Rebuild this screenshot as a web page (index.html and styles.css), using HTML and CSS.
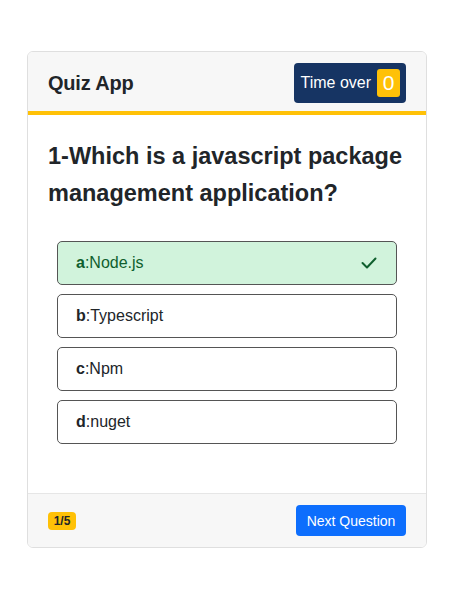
FILE: index.html
```html
<!DOCTYPE html>
<html lang="en">
<head>
<meta charset="utf-8">
<title>Quiz App</title>
<link rel="stylesheet" href="styles.css">
</head>
<body>
<div class="card">
  <div class="card-header">
    <h5 class="title">Quiz App</h5>
    <div class="timer"><span>Time over</span> <span class="timer-count">0</span></div>
  </div>
  <div class="card-body">
    <h4 class="question">1-Which is a javascript package management application?</h4>
    <ul class="options">
      <li class="option correct"><span><b>a</b>:Node.js</span>
        <svg class="check" width="16" height="12" viewBox="0 0 16 12"><polyline points="1.5,6 6,10.5 14.5,1.5" fill="none" stroke="currentColor" stroke-width="2" stroke-linecap="round" stroke-linejoin="round"/></svg>
      </li>
      <li class="option"><span><b>b</b>:Typescript</span></li>
      <li class="option"><span><b>c</b>:Npm</span></li>
      <li class="option"><span><b>d</b>:nuget</span></li>
    </ul>
  </div>
  <div class="card-footer">
    <span class="badge">1/5</span>
    <button class="btn-next">Next Question</button>
  </div>
</div>
</body>
</html>
```
FILE: styles.css
```css
* { box-sizing: border-box; }
body {
  margin: 0;
  font-family: "Liberation Sans", Arial, sans-serif;
  color: #212529;
  background: #fff;
}
.card {
  width: 400px;
  margin: 51px 0 0 27px;
  border: 1px solid #dfdfdf;
  border-radius: 6px;
  overflow: hidden;
  background: #fff;
}
.card-header {
  display: flex;
  justify-content: space-between;
  align-items: center;
  height: 63px;
  padding: 11px 20px 8px 20px;
  background: #f7f7f7;
  border-bottom: 4px solid #ffc107;
}
.title {
  margin: 0;
  font-size: 20px;
  font-weight: 700;
  color: #212529;
  letter-spacing: -0.2px;
}
.timer {
  display: flex;
  align-items: center;
  gap: 6px;
  height: 40px;
  flex-shrink: 0;
  white-space: nowrap;
  padding: 0 6px 0 6px;
  background: #163463;
  color: #fff;
  font-size: 16px;
  border-radius: 4px;
}
.timer-count {
  display: flex;
  align-items: center;
  justify-content: center;
  width: 23px;
  height: 28px;
  background: #ffc107;
  color: #fff;
  font-size: 21px;
  border-radius: 3px;
}
.card-body {
  padding: 23px 20px 49px 20px;
}
.question {
  margin: 0 0 29px 0;
  font-size: 23.5px;
  line-height: 37px;
  font-weight: 700;
  color: #212529;
}
.options {
  list-style: none;
  margin: 0 9px;
  padding: 0;
  display: flex;
  flex-direction: column;
  gap: 9px;
}
.option {
  display: flex;
  align-items: center;
  justify-content: space-between;
  height: 44px;
  padding: 0 19px 0 18px;
  border: 1px solid #555;
  border-radius: 5px;
  font-size: 16px;
  color: #212529;
}
.option b { font-weight: 700; }
.option.correct {
  background: #d1f3dc;
  color: #0f5f2e;
}
.check { color: #0f5f2e; }
.card-footer {
  display: flex;
  justify-content: space-between;
  align-items: center;
  padding: 11px 20px;
  background: #f7f7f7;
  border-top: 1px solid #e6e6e6;
}
.badge {
  display: inline-flex;
  align-items: center;
  justify-content: center;
  width: 28px;
  height: 18px;
  background: #ffc107;
  color: #212529;
  font-size: 12px;
  font-weight: 700;
  border-radius: 4px;
}
.btn-next {
  height: 31px;
  width: 110px;
  padding: 0 8px;
  border: none;
  border-radius: 4px;
  background: #0d6efd;
  color: #fff;
  font-family: inherit;
  font-size: 14px;
}
```
